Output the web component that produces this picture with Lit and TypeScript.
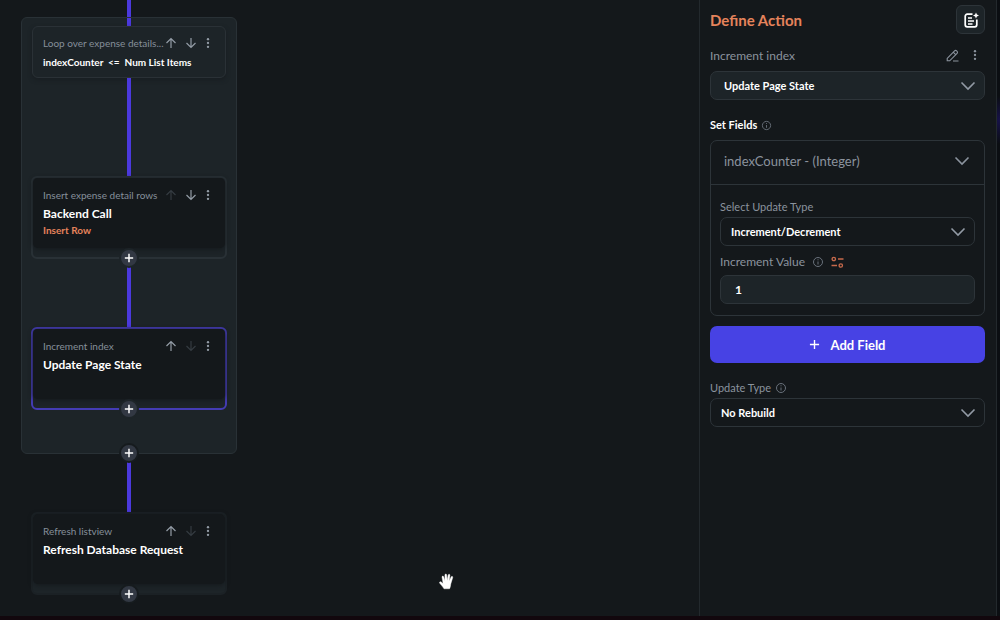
import { LitElement, html, svg, css, nothing } from "lit";
import { customElement, property } from "lit/decorators.js";

const icon = (body: unknown, size = 12, box = 24) =>
  html`<svg class="icon" width=${size} height=${size} viewBox="0 0 ${box} ${box}" aria-hidden="true">${body}</svg>`;

const ARROW_UP = svg`<path d="M12 22V3M3 12l9-9 9 9"/>`;
const ARROW_DOWN = svg`<path d="M12 2v19M3 12l9 9 9-9"/>`;
const DOTS = svg`<g fill="currentColor" stroke="none"><circle cx="12" cy="2.8" r="2.8"/><circle cx="12" cy="12" r="2.8"/><circle cx="12" cy="21.2" r="2.8"/></g>`;
const PLUS = svg`<path d="M12 2v20M2 12h20"/>`;
const CHEVRON = svg`<path d="M1.5 4.5l6.5 6.5 6.5-6.5"/>`;
const INFO = svg`<circle cx="6" cy="6" r="4.5"/><path d="M6 5.5v3M6 3.3v1"/>`;
const PENCIL = svg`<path d="M1.200 11.800v-2.400L8.600 1.800a1.400 1.400 0 0 1 2 0l.5.500a1.400 1.400 0 0 1 0 2L3.700 11.800zM7.200 3.200l2.500 2.500M7 12h5.500"/>`;
const NOTE = svg`<path d="M9.500 2.200H4.200a2 2 0 0 0-2 2v8.600a2 2 0 0 0 2 2h7.600a2 2 0 0 0 2-2V7.500M5 6h4M5 9h6M5 12h4.500"/><path d="M13 .4l.9 2.200 2.100.9-2.100.9-.9 2.200-.9-2.200-2.100-.9 2.100-.9z" fill="currentColor" stroke="none"/>`;
const VARIABLE = svg`<circle cx="2.800" cy="3" r="1.700"/><path d="M7 3h5.500M.5 9.500H6"/><circle cx="9.800" cy="9.500" r="1.700"/>`;

const base = css`
  * { box-sizing: border-box; }
  button, input, select { font: inherit; color: inherit; margin: 0; }
  button { display: inline-flex; align-items: center; justify-content: center; padding: 0; border: 0; background: none; cursor: pointer; }
  svg { display: block; flex: none; }
  .icon { fill: none; stroke: currentColor; stroke-width: 2.4; }
`;

@customElement("action-node")
export class ActionNode extends LitElement {
  @property() note = "";
  @property() heading = "";
  @property() detail = "";
  @property() kind = "step";
  @property({ type: Boolean }) selected = false;
  @property({ type: Boolean }) first = false;
  @property({ type: Boolean }) last = false;

  static styles = [base, css`
    :host { display: block; width: 100%; }
    .node { display: flex; flex-direction: column; height: 83px; border: 2px solid #293136; border-radius: 6px; background: #1d2428; }
    .node.plain { border-color: #1b2125; }
    .node.selected { border-color: #443cb4; }
    .node.loop { height: 52px; margin: 0 1px; border-width: 1px; border-color: #2a3136; box-shadow: 0 2px 4px #14181b80; }
    .body { height: 70px; padding: 9px 12px 0 10px; border-radius: 5px; background: #14181b; box-shadow: 0 1px 5px #14181b; }
    .loop .body { background: none; box-shadow: none; height: auto; padding-top: 8px; }
    .top { display: flex; align-items: center; height: 16px; }
    .note { flex: 1; min-width: 0; white-space: nowrap; font-size: 10px; line-height: 16px; color: #858f9a; }
    .tools { display: flex; align-items: center; gap: 8px; color: #939ca6; }
    .dots { margin-left: -2px; }
    button:disabled { color: #343b41; cursor: default; }
    .heading { margin: 0; font-size: 12px; line-height: 22px; font-weight: 700; color: #fff; white-space: pre; }
    .loop .heading { font-size: 10px; }
    .detail { margin: 0; font-size: 10px; line-height: 10px; font-weight: 700; color: #e5835b; }
  `];

  render() {
    const mode = this.kind === "loop" ? "loop" : this.selected ? "selected" : this.kind;
    return html`
      <article class="node ${mode}">
        <div class="body">
          <div class="top">
            <span class="note">${this.note}</span>
            <span class="tools">
              <button aria-label="Move up" ?disabled=${this.first}>${icon(ARROW_UP)}</button>
              <button aria-label="Move down" ?disabled=${this.last}>${icon(ARROW_DOWN)}</button>
              <button class="dots" aria-label="More options">${icon(DOTS, 10)}</button>
            </span>
          </div>
          <h3 class="heading">${this.heading}</h3>
          ${this.detail ? html`<p class="detail">${this.detail}</p>` : nothing}
        </div>
      </article>`;
  }
}

@customElement("action-flow")
export class ActionFlow extends LitElement {
  static styles = [base, css`
    :host { display: block; position: relative; min-width: 0; padding-left: 21px; }
    .flow { display: flex; flex-direction: column; align-items: center; width: 216px; }
    .group { display: flex; flex-direction: column; align-items: center; width: 100%; padding: 0 9px; border: 1px solid #293136; border-radius: 6px; background: #1d2428; }
    .solo { width: 100%; padding: 0 10px; }
    .line { width: 4px; background: #4b39dd; }
    .lead { height: 17px; }
    .inlet { height: 8px; }
    .long { height: 98px; }
    .mid { height: 60px; }
    .exit { height: 50px; }
    .add { width: 20px; height: 20px; margin: -11px 0 -1px; z-index: 1; color: #fff; border-radius: 50%; border: 2px solid #1d2428; background: #323843; }
    .add .icon { stroke-width: 3.5; }
    .add.after { margin-bottom: 34px; }
    .add.outer { border-color: #161b1e; }
    .hand { position: absolute; left: 439px; top: 573px; }
  `];

  private add(extra = "") {
    return html`<button class="add ${extra}" aria-label="Add action">${icon(PLUS, 10)}</button>`;
  }

  render() {
    return html`
      <div class="flow">
        <div class="line lead"></div>
        <div class="group">
          <div class="line inlet"></div>
          <action-node kind="loop" note="Loop over expense details..." heading="indexCounter  <=  Num List Items"></action-node>
          <div class="line long"></div>
          <action-node note="Insert expense detail rows" heading="Backend Call" detail="Insert Row" first></action-node>
          ${this.add()}
          <div class="line mid"></div>
          <action-node note="Increment index" heading="Update Page State" selected last></action-node>
          ${this.add("after")}
        </div>
        ${this.add("outer")}
        <div class="line exit"></div>
        <div class="solo">
          <action-node kind="plain" note="Refresh listview" heading="Refresh Database Request" last></action-node>
        </div>
        ${this.add("outer")}
      </div>
      <svg class="hand" width="16" height="17" viewBox="0 0 16 17" aria-hidden="true">
        <path d="M5 15.800C3.600 13.600 1.800 11.600.6 10.100c-.6-1 .7-1.800 1.600-1.100l1.900 1.500L3 4.200c-.2-1.300 1.400-1.500 1.700-.4l1.200 4L5.900 2c0-1.300 1.700-1.300 1.800 0l.4 5.500L9.200 2c.3-1.200 1.900-.9 1.700.4l-.7 5.700 1.900-4.200c.6-1.100 2-.4 1.600.8l-1.900 6.200c-.3 2.100-.5 3.600-1.300 4.900z" fill="#fff" stroke="#fff" stroke-width=".4"/>
      </svg>`;
  }
}

@customElement("action-panel")
export class ActionPanel extends LitElement {
  static styles = [base, css`
    :host { display: block; padding: 5px 11px 0 10px; border: solid #23292d; border-width: 0 1px; color: #8b939e; }
    .row { display: flex; align-items: center; }
    .title { flex: 1; margin: 0; font-size: 15px; line-height: 28px; font-weight: 700; color: #e5835b; }
    .note-button { width: 29px; height: 29px; border: 1px solid #2d3439; border-radius: 6px; background: #1d2428; color: #fff; }
    .note-button .icon { stroke-width: 1.7; }
    .name { height: 16px; margin: 13px 0 8px; gap: 11px; font-size: 12px; padding-right: 5px; }
    .name span { flex: 1; }
    .thin .icon { stroke-width: 1.1; }
    .picker { display: grid; align-items: center; height: 29px; }
    .picker > * { grid-area: 1 / 1; }
    .picker .icon { justify-self: end; margin-right: 9px; pointer-events: none; stroke-width: 1.6; color: #929aa5; }
    select, input { width: 100%; height: 29px; border: 1px solid #2d3439; border-radius: 7px; background: #14181b; color: #fff; font-size: 11px; font-weight: 700; appearance: none; padding: 0 10px; }
    select.filled, input { background: #1d2428; }
    select.filled { padding-left: 13px; }
    input { padding-left: 14px; font-size: 12px; }
    .label { height: 16px; gap: 4px; font-size: 11px; line-height: 16px; }
    .label .icon { stroke-width: 1; color: #69717b; }
    .set { margin: 17px 0 7px; color: #fff; font-weight: 700; }
    .field { border: 1px solid #2d3439; border-radius: 7px; }
    .field-head { width: 100%; height: 44px; padding: 0 14px 3px 13px; border-bottom: 1px solid #2d3439; justify-content: space-between; font-size: 13px; }
    .field-head .icon { stroke-width: 1.6; }
    .field-body { padding: 14px 9px 11px; }
    .field-body .picker { margin: 2px 0 8px; }
    .value { gap: 7px; font-size: 12px; margin-bottom: 5px; }
    .value .accent { color: #c76a4c; stroke-width: 1.3; }
    .add-field { width: 100%; height: 37px; margin: 10px 0 17px; gap: 10px; border-radius: 7px; background: #4742e4; color: #fff; font-size: 13px; font-weight: 700; }
    .add-field .icon { stroke-width: 3; }
    .rebuild { margin-bottom: 2px; }
  `];

  private picker(id: string, value: string, filled = false) {
    return html`<div class="picker">
      <select id=${id} class=${filled ? "filled" : "plain"}><option>${value}</option></select>
      ${icon(CHEVRON, 16, 16)}
    </div>`;
  }

  render() {
    return html`
      <div class="row">
        <h2 class="title">Define Action</h2>
        <button class="note-button" aria-label="Add note">${icon(NOTE, 16, 16)}</button>
      </div>
      <div class="row name">
        <span><label for="action">Increment index</label></span>
        <button class="thin" aria-label="Rename">${icon(PENCIL, 13, 13)}</button>
        <button aria-label="More options">${icon(DOTS, 10)}</button>
      </div>
      ${this.picker("action", "Update Page State", true)}
      <div class="row label set">Set Fields ${icon(INFO, 11, 12)}</div>
      <section class="field">
        <button class="field-head">indexCounter - (Integer) ${icon(CHEVRON, 16, 16)}</button>
        <div class="field-body">
          <label class="row label" for="update">Select Update Type</label>
          ${this.picker("update", "Increment/Decrement")}
          <div class="row label value">
            <label for="value">Increment Value</label>
            ${icon(INFO, 12, 12)}
            <svg class="icon accent" width="13" height="12" viewBox="0 0 13 12" aria-hidden="true">${VARIABLE}</svg>
          </div>
          <input id="value" value="1">
        </div>
      </section>
      <button class="add-field">${icon(PLUS, 11)} Add Field</button>
      <div class="row label rebuild"><label for="rebuild">Update Type</label> ${icon(INFO, 12, 12)}</div>
      ${this.picker("rebuild", "No Rebuild")}
    `;
  }
}

@customElement("app-root")
export class AppRoot extends LitElement {
  static styles = css`
    :host { display: grid; grid-template-columns: minmax(0, 1fr) 298px 3px; grid-template-rows: 1fr 4px; height: 100vh; overflow: hidden; background: #14181b; font-family: Lato, "Liberation Sans", sans-serif; }
    .edge { background: radial-gradient(circle at 3px 120px, #17124a, #0b0e12 24px); }
    .foot { grid-column: 1 / -1; background: #12070d; }
    action-flow, action-panel { min-height: 0; }
  `;

  render() {
    return html`
      <action-flow></action-flow>
      <action-panel></action-panel>
      <div class="edge"></div>
      <div class="foot"></div>`;
  }
}
